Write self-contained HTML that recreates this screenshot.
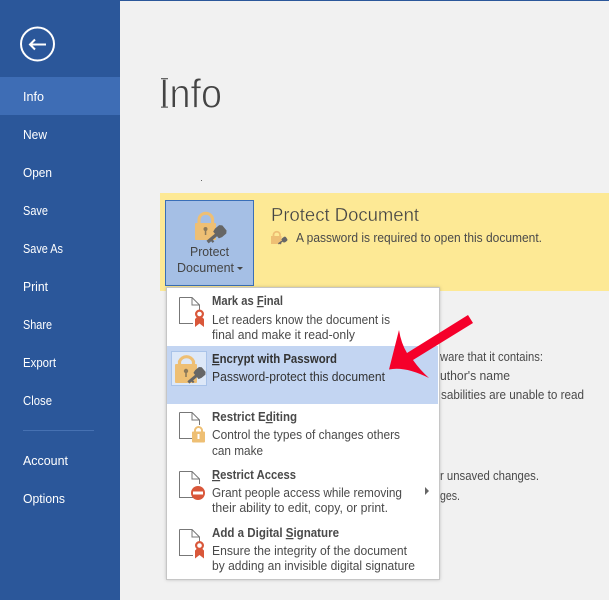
<!DOCTYPE html>
<html><head><meta charset="utf-8"><style>
html,body{margin:0;padding:0;background:#f1f1f1}
svg{display:block}
text{font-family:"Liberation Sans",sans-serif}
.n{font-size:13.200px;fill:#fff}
.t{font-size:12.500px;font-weight:bold;fill:#4a4a4a}
.d{font-size:12.500px;fill:#4a4a4a}
.b{font-size:12.500px;fill:#4a4a4a}
</style></head><body>
<svg width="609" height="600" viewBox="0 0 609 600" xmlns="http://www.w3.org/2000/svg">
<defs>
<filter id="s" x="-5%" y="-5%" width="110%" height="110%"><feDropShadow dx="0" dy="0" stdDeviation="1.500" flood-color="#000" flood-opacity=".2"/></filter>
<g id="doc"><path d="M.5 .5H13L20.500 8V13M.5 .5V26.500H14M13 .5V8H20.500" fill="none" stroke="#777" stroke-width="1"/></g>
<g id="rib"><path d="M-3 7.500L-4.500 9V17L0 13.500L4.500 17V9L3 7.500Z" fill="#d9573a"/><circle cx="0" cy="4" r="3.400" fill="#fff" stroke="#d9573a" stroke-width="2.200"/></g>
<path id="key" d="M-10 -1.500H0V-4L3 -5H8L10 -3V3L8 5H3L0 4V1.500H-5V3.500H-7V1.500H-10Z"/>
</defs>
<rect width="609" height="600" fill="#f1f1f1"/>
<rect x="120" width="489" height="1" fill="#2b579a"/>
<rect width="120" height="600" fill="#2b579a"/>
<rect y="77" width="120" height="38" fill="#3e6db5"/>
<circle cx="37.500" cy="44" r="16.500" fill="none" stroke="#fff" stroke-width="2"/>
<path d="M30 44.500H46M35 39.500L30 44.500L35 49.500" fill="none" stroke="#fff" stroke-width="2"/>
<text class="n" x="23" y="101" textLength="21" lengthAdjust="spacingAndGlyphs">Info</text>
<text class="n" x="23" y="139" textLength="24" lengthAdjust="spacingAndGlyphs">New</text>
<text class="n" x="23" y="177" textLength="29" lengthAdjust="spacingAndGlyphs">Open</text>
<text class="n" x="23" y="215" textLength="25" lengthAdjust="spacingAndGlyphs">Save</text>
<text class="n" x="23" y="253" textLength="40" lengthAdjust="spacingAndGlyphs">Save As</text>
<text class="n" x="23" y="291" textLength="25" lengthAdjust="spacingAndGlyphs">Print</text>
<text class="n" x="23" y="329" textLength="29" lengthAdjust="spacingAndGlyphs">Share</text>
<text class="n" x="23" y="367" textLength="33" lengthAdjust="spacingAndGlyphs">Export</text>
<text class="n" x="23" y="405" textLength="29" lengthAdjust="spacingAndGlyphs">Close</text>
<rect x="23" y="430" width="71" height="1" fill="#4671b2"/>
<text class="n" x="23" y="465" textLength="45" lengthAdjust="spacingAndGlyphs">Account</text>
<text class="n" x="23" y="503" textLength="42" lengthAdjust="spacingAndGlyphs">Options</text>

<text x="159" y="107.500" font-size="41" fill="#444" stroke="#f1f1f1" stroke-width=".9" textLength="63" lengthAdjust="spacingAndGlyphs">Info</text>
<rect x="161" y="78" width="7" height="1.300" fill="#666"/><rect x="161" y="106.500" width="7" height="1.300" fill="#666"/>
<rect x="201" y="180" width="1" height="1" fill="#666"/>

<rect x="160" y="193" width="449" height="98" fill="#fde995"/>
<rect x="165.500" y="200.500" width="88" height="85" fill="#a5bfe5" stroke="#3a6fb8"/>
<g>
<path d="M199 224V220A6.800 6.800 0 0 1 212.600 220V224" fill="none" stroke="#eebf74" stroke-width="3"/>
<rect x="195" y="223" width="21" height="17" rx="1" fill="#eebf74"/>
<circle cx="205.500" cy="229" r="2" fill="#8d7a5a"/><rect x="204.800" y="229" width="1.500" height="6" fill="#8d7a5a"/>
<use href="#key" transform="translate(216 235) rotate(-40) scale(1.100)" fill="#666"/>
</g>
<text x="190" y="256" font-size="13" fill="#444" textLength="39" lengthAdjust="spacingAndGlyphs">Protect</text>
<text x="177" y="272" font-size="13" fill="#444" textLength="57" lengthAdjust="spacingAndGlyphs">Document</text>
<path d="M237 267H243L240 270Z" fill="#444"/>
<text x="271" y="221" font-size="18" fill="#444" stroke="#fde995" stroke-width=".3" textLength="148" lengthAdjust="spacingAndGlyphs">Protect Document</text>
<g>
<path d="M273.500 236V234.500A3.300 3.300 0 0 1 280 234.500V236" fill="none" stroke="#eebf74" stroke-width="1.800"/>
<rect x="271" y="236" width="10.500" height="8" fill="#eebf74"/>
<use href="#key" transform="translate(282.500 241) rotate(-35) scale(.5)" fill="#666"/>
</g>
<text class="b" x="296" y="242" textLength="246" lengthAdjust="spacingAndGlyphs">A password is required to open this document.</text>

<text class="b" x="440" y="361" textLength="103" lengthAdjust="spacingAndGlyphs">ware that it contains:</text>
<text class="b" x="440" y="380" textLength="70" lengthAdjust="spacingAndGlyphs">uthor's name</text>
<text class="b" x="441" y="399" textLength="143" lengthAdjust="spacingAndGlyphs">sabilities are unable to read</text>
<text class="b" x="440" y="480" textLength="99" lengthAdjust="spacingAndGlyphs">r unsaved changes.</text>
<text class="b" x="440" y="500" textLength="20" lengthAdjust="spacingAndGlyphs">ges.</text>

<rect x="166.500" y="287.500" width="273" height="292" fill="#fff" stroke="#c6c6c6" filter="url(#s)"/>
<rect x="167" y="346" width="271" height="58" fill="#c3d5f2"/>
<rect x="171.500" y="351.500" width="35" height="34" fill="#dde8f8" stroke="#a9c3e9"/>

<use href="#doc" x="179" y="297"/><use href="#rib" x="199.500" y="310"/>
<text class="t" x="212" y="305" textLength="71" lengthAdjust="spacingAndGlyphs">Mark as <tspan text-decoration="underline">F</tspan>inal</text>
<text class="d" x="212" y="324" textLength="178" lengthAdjust="spacingAndGlyphs">Let readers know the document is</text>
<text class="d" x="212" y="339" textLength="143" lengthAdjust="spacingAndGlyphs">final and make it read-only</text>

<g>
<path d="M179.500 365V361.500A7.500 7.500 0 0 1 193.500 361.500V365" fill="none" stroke="#eebf74" stroke-width="3.200"/>
<rect x="175" y="364" width="22" height="19" rx="1" fill="#eebf74"/>
<circle cx="186" cy="371" r="2.200" fill="#8d7a5a"/><rect x="185.200" y="371" width="1.600" height="6" fill="#8d7a5a"/>
<use href="#key" transform="translate(196 376) rotate(-40) scale(1)" fill="#666"/>
</g>
<text class="t" x="212" y="363" textLength="125" lengthAdjust="spacingAndGlyphs" style="fill:#333"><tspan text-decoration="underline">E</tspan>ncrypt with Password</text>
<text class="d" x="212" y="381" textLength="173" lengthAdjust="spacingAndGlyphs" style="fill:#333">Password-protect this document</text>

<use href="#doc" x="179" y="412"/>
<g><path d="M195 432V430.500A3.500 3.500 0 0 1 202 430.500V432" fill="none" stroke="#eebf74" stroke-width="2"/><rect x="192" y="431.500" width="13" height="11" rx="1" fill="#eebf74"/><rect x="197.500" y="434" width="2" height="5" fill="#fff"/></g>
<text class="t" x="212" y="421" textLength="85" lengthAdjust="spacingAndGlyphs">Restrict E<tspan text-decoration="underline">d</tspan>iting</text>
<text class="d" x="212" y="439" textLength="188" lengthAdjust="spacingAndGlyphs">Control the types of changes others</text>
<text class="d" x="212" y="455" textLength="51" lengthAdjust="spacingAndGlyphs">can make</text>

<use href="#doc" x="179" y="471"/>
<circle cx="198" cy="493" r="7" fill="#d9573a"/><rect x="193" y="491.500" width="10" height="3" fill="#fff"/>
<text class="t" x="212" y="479" textLength="84" lengthAdjust="spacingAndGlyphs"><tspan text-decoration="underline">R</tspan>estrict Access</text>
<text class="d" x="212" y="497" textLength="190" lengthAdjust="spacingAndGlyphs">Grant people access while removing</text>
<text class="d" x="212" y="512" textLength="176" lengthAdjust="spacingAndGlyphs">their ability to edit, copy, or print.</text>
<path d="M425 487L429 491L425 495Z" fill="#666"/>

<use href="#doc" x="179" y="529"/><use href="#rib" x="199.500" y="541.500"/>
<text class="t" x="212" y="537" textLength="127" lengthAdjust="spacingAndGlyphs">Add a Digital <tspan text-decoration="underline">S</tspan>ignature</text>
<text class="d" x="212" y="555" textLength="195" lengthAdjust="spacingAndGlyphs">Ensure the integrity of the document</text>
<text class="d" x="212" y="570" textLength="203" lengthAdjust="spacingAndGlyphs">by adding an invisible digital signature</text>

<path d="M389 369.500L399 330Q401 343 407 353L468 315L473 323L413 360Q420 370 429 378Q405 366 389 369.500Z" fill="#f5002a"/>
</svg>
</body></html>
